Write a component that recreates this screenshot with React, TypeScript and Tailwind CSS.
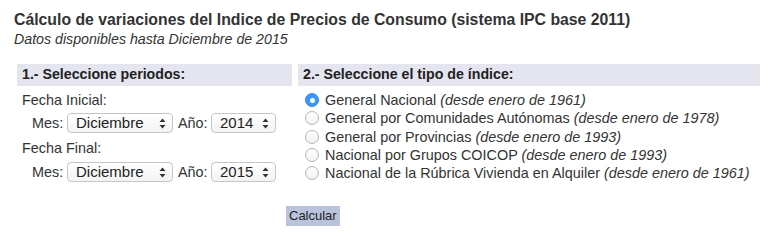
import React from "react";

const font = { fontFamily: '"Liberation Sans", Arial, sans-serif' };

function Arrows() {
  return (
    <svg width="7" height="11" viewBox="0 0 7 11" className="shrink-0">
      <path d="M3.5 0.5 L6.5 4 L0.5 4 Z" fill="#333" />
      <path d="M3.5 10.5 L6.5 7 L0.5 7 Z" fill="#333" />
    </svg>
  );
}

function FakeSelect({ value, w }: { value: string; w: string }) {
  return (
    <div
      className={`flex items-center justify-between h-[20px] ${w} rounded-[4px] border border-[#c6c6c6] bg-gradient-to-b from-white to-[#f3f3f3] pl-[8px] pr-[6px] text-[15px] leading-[18px] text-[#222] shrink-0`}
    >
      <span>{value}</span>
      <Arrows />
    </div>
  );
}

function Radio({ checked }: { checked?: boolean }) {
  if (checked) {
    return (
      <div className="w-[14px] h-[14px] rounded-full bg-[#3d97fa] border border-[#3586e6] flex items-center justify-center shrink-0">
        <div className="w-[5px] h-[5px] rounded-full bg-white" />
      </div>
    );
  }
  return <div className="w-[14px] h-[14px] rounded-full border border-[#b4b4b4] bg-gradient-to-b from-white to-[#f2f2f2] shrink-0" />;
}

const options: [string, string, boolean?][] = [
  ["General Nacional", "(desde enero de 1961)", true],
  ["General por Comunidades Autónomas", "(desde enero de 1978)"],
  ["General por Provincias", "(desde enero de 1993)"],
  ["Nacional por Grupos COICOP", "(desde enero de 1993)"],
  ["Nacional de la Rúbrica Vivienda en Alquiler", "(desde enero de 1961)"],
];

function DateRow({ year }: { year: string }) {
  return (
    <div className="flex items-center h-[20px] leading-[18px] pl-[10px]">
      <span className="w-[35px]">Mes:</span>
      <FakeSelect value="Diciembre" w="w-[106px]" />
      <span className="ml-[5px] w-[33px]">Año:</span>
      <FakeSelect value={year} w="w-[65px]" />
    </div>
  );
}

export default function App() {
  return (
    <div className="w-[777px] h-[234px] bg-white text-[#333]" style={font}>
      <div className="pl-[14px] pt-[11px]">
        <h1 className="text-[15.8px] font-bold leading-[18px] text-[#333]">
          Cálculo de variaciones del Indice de Precios de Consumo (sistema IPC base 2011)
        </h1>
        <p className="italic text-[14.2px] leading-[16px] mt-[2px]">Datos disponibles hasta Diciembre de 2015</p>
      </div>
      <div className="flex gap-[6px] pl-[17px] mt-[17px]">
        <div className="w-[275px] shrink-0">
          <div className="h-[22px] bg-[#e5e5f0] flex items-center pl-[5px] text-[14.2px] font-bold text-[#222]">
            1.- Seleccione periodos:
          </div>
          <div className="pl-[5px] text-[14.4px] leading-[18px]">
            <div className="h-[18px] mt-[5px]">Fecha Inicial:</div>
            <div className="mt-[4px]">
              <DateRow year="2014" />
            </div>
            <div className="h-[18px] mt-[6px]">Fecha Final:</div>
            <div className="mt-[5px]">
              <DateRow year="2015" />
            </div>
          </div>
        </div>
        <div className="w-[462px] shrink-0">
          <div className="h-[22px] bg-[#e5e5f0] flex items-center pl-[5px] text-[14.2px] font-bold text-[#222]">
            2.- Seleccione el tipo de índice:
          </div>
          <div className="mt-[5px] pl-[7px] text-[14.4px] leading-[18px]">
            {options.map(([a, b, c]) => (
              <div key={a} className="flex items-center h-[18.33px] gap-[6px]">
                <Radio checked={c} />
                <span className="whitespace-nowrap">
                  {a} <i>{b}</i>
                </span>
              </div>
            ))}
          </div>
        </div>
      </div>
      <div className="pl-[286px] mt-[23px]">
        <button className="block h-[20px] px-[3px] bg-[#b9c4dc] text-[13px] text-[#222] leading-[20px]">Calcular</button>
      </div>
    </div>
  );
}
